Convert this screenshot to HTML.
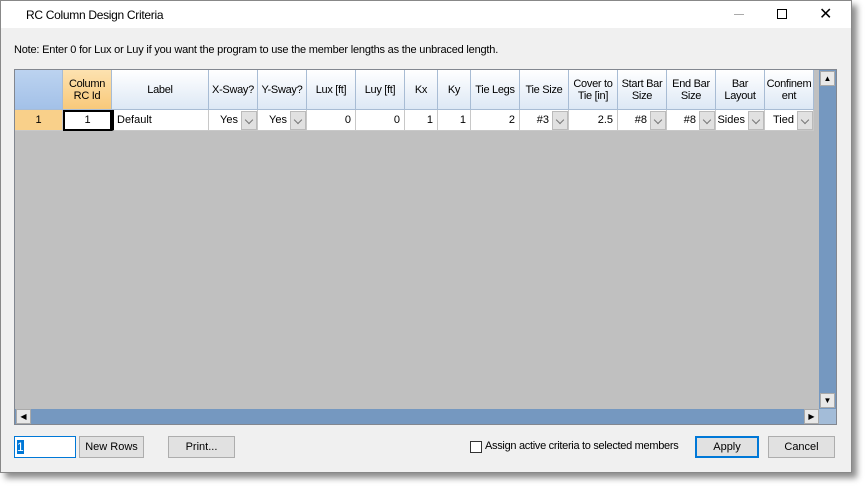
<!DOCTYPE html>
<html><head><style>
*{box-sizing:border-box;margin:0;padding:0}
body{width:866px;height:487px;background:#fff;font-family:"Liberation Sans",sans-serif;font-size:11px;color:#000;position:relative;overflow:hidden}
.win{position:absolute;left:0;top:0;width:852px;height:473px;background:#f0f0f0;border:1px solid #888;box-shadow:5px 5px 6px rgba(0,0,0,.45)}
.title{position:absolute;left:0;top:0;width:850px;height:27px;background:#fff}
.a{position:absolute}
.grid{position:absolute;left:13px;top:68px;width:823px;height:356px;background:#c0c0c0;border:1px solid #828790}
.h{position:absolute;top:0;height:40px;background:linear-gradient(#fff,#dde8f5);border-right:1px solid #a8bcd4;border-bottom:1px solid #a8bcd4;display:flex;align-items:center;justify-content:center;text-align:center;line-height:12px;font-size:11px;letter-spacing:-0.3px}
.c{position:absolute;top:40px;height:21px;background:#fff;border-right:1px solid #c8c8c8;border-bottom:1px solid #c8c8c8;line-height:20px;text-align:right;padding-right:4px}
.dd{position:absolute;top:41px;width:16px;height:19px;background:#e1e1e1;border:1px solid #bbb}
.dd::after{content:"";position:absolute;left:4px;top:5px;width:5px;height:5px;border-right:1px solid #777;border-bottom:1px solid #777;transform:rotate(45deg)}
.btn{position:absolute;height:22px;background:#e1e1e1;border:1px solid #adadad;text-align:center;line-height:20px;font-size:11px}
</style></head><body>
<div class="win">
<div class="title"></div>
<div class="a" style="left:25px;top:7px;font-size:12px;letter-spacing:-0.3px">RC Column Design Criteria</div>
<div class="a" style="left:733px;top:13px;width:10px;height:1px;background:#aaa"></div>
<div class="a" style="left:776px;top:8px;width:10px;height:10px;border:1px solid #000"></div>
<div class="a" style="left:818px;top:3px;font-size:16px">✕</div>
<div class="a" style="left:13px;top:43px;font-size:11px;letter-spacing:-0.2px">Note: Enter 0 for Lux or Luy if you want the program to use the member lengths as the unbraced length.</div>
<div class="grid">
<div class="h" style="left:0;width:48px;background:linear-gradient(#bcd3f0,#a3c1e8)"></div>
<div class="h" style="left:48px;width:49px;background:linear-gradient(#fde2b0,#f8c97a)">Column<br>RC Id</div>
<div class="h" style="left:97px;width:97px">Label</div>
<div class="h" style="left:194px;width:49px">X-Sway?</div>
<div class="h" style="left:243px;width:49px">Y-Sway?</div>
<div class="h" style="left:292px;width:49px">Lux [ft]</div>
<div class="h" style="left:341px;width:49px">Luy [ft]</div>
<div class="h" style="left:390px;width:33px">Kx</div>
<div class="h" style="left:423px;width:33px">Ky</div>
<div class="h" style="left:456px;width:49px">Tie Legs</div>
<div class="h" style="left:505px;width:49px">Tie Size</div>
<div class="h" style="left:554px;width:49px">Cover to<br>Tie [in]</div>
<div class="h" style="left:603px;width:49px">Start Bar<br>Size</div>
<div class="h" style="left:652px;width:49px">End Bar<br>Size</div>
<div class="h" style="left:701px;width:49px">Bar<br>Layout</div>
<div class="h" style="left:750px;width:49px">Confinem<br>ent</div>
<div class="c" style="left:0;width:48px;background:#f9d08a;text-align:center;padding:0">1</div>
<div class="c" style="left:48px;width:49px;border:2px solid #000;text-align:center;padding:0;line-height:17px">1</div>
<div class="c" style="left:97px;width:97px;text-align:left;padding-left:3px;border-left:2px solid #000">Default</div>
<div class="c" style="left:194px;width:49px;padding-right:19px">Yes</div><div class="dd" style="left:226px"></div>
<div class="c" style="left:243px;width:49px;padding-right:19px">Yes</div><div class="dd" style="left:275px"></div>
<div class="c" style="left:292px;width:49px">0</div>
<div class="c" style="left:341px;width:49px">0</div>
<div class="c" style="left:390px;width:33px">1</div>
<div class="c" style="left:423px;width:33px">1</div>
<div class="c" style="left:456px;width:49px">2</div>
<div class="c" style="left:505px;width:49px;padding-right:19px">#3</div><div class="dd" style="left:537px"></div>
<div class="c" style="left:554px;width:49px">2.5</div>
<div class="c" style="left:603px;width:49px;padding-right:19px">#8</div><div class="dd" style="left:635px"></div>
<div class="c" style="left:652px;width:49px;padding-right:19px">#8</div><div class="dd" style="left:684px"></div>
<div class="c" style="left:701px;width:49px;padding-right:19px">Sides</div><div class="dd" style="left:733px"></div>
<div class="c" style="left:750px;width:49px;padding-right:19px">Tied</div><div class="dd" style="left:782px"></div>
<div class="a" style="left:804px;top:0;width:17px;height:339px;background:#7598c0"></div>
<div class="a" style="left:805px;top:1px;width:15px;height:15px;background:#e8e8e8;border:1px solid #aaa;font-size:8px;text-align:center;line-height:13px">▲</div>
<div class="a" style="left:805px;top:323px;width:15px;height:15px;background:#e8e8e8;border:1px solid #aaa;font-size:8px;text-align:center;line-height:13px">▼</div>
<div class="a" style="left:0;top:339px;width:804px;height:15px;background:#7598c0"></div>
<div class="a" style="left:1px;top:339px;width:15px;height:15px;background:#e8e8e8;border:1px solid #aaa;font-size:8px;text-align:center;line-height:13px">◀</div>
<div class="a" style="left:789px;top:339px;width:15px;height:15px;background:#e8e8e8;border:1px solid #aaa;font-size:8px;text-align:center;line-height:13px">▶</div>
<div class="a" style="left:804px;top:339px;width:17px;height:15px;background:#a3bcd8"></div>
</div>
<div class="a" style="left:13px;top:435px;width:62px;height:22px;background:#fff;border:1px solid #0078d7;font-size:12px;line-height:20px;padding-left:2px"><span style="background:#0078d7;color:#fff">1</span></div>
<div class="btn" style="left:78px;top:435px;width:65px">New Rows</div>
<div class="btn" style="left:167px;top:435px;width:67px">Print...</div>
<div class="a" style="left:469px;top:440px;width:12px;height:12px;border:1px solid #333;background:#fff"></div>
<div class="a" style="left:484px;top:439px;font-size:11px;letter-spacing:-0.3px">Assign active criteria to selected members</div>
<div class="btn" style="left:694px;top:435px;width:64px;border:2px solid #0078d7;line-height:18px">Apply</div>
<div class="btn" style="left:767px;top:435px;width:67px">Cancel</div>
</div>
</body></html>
